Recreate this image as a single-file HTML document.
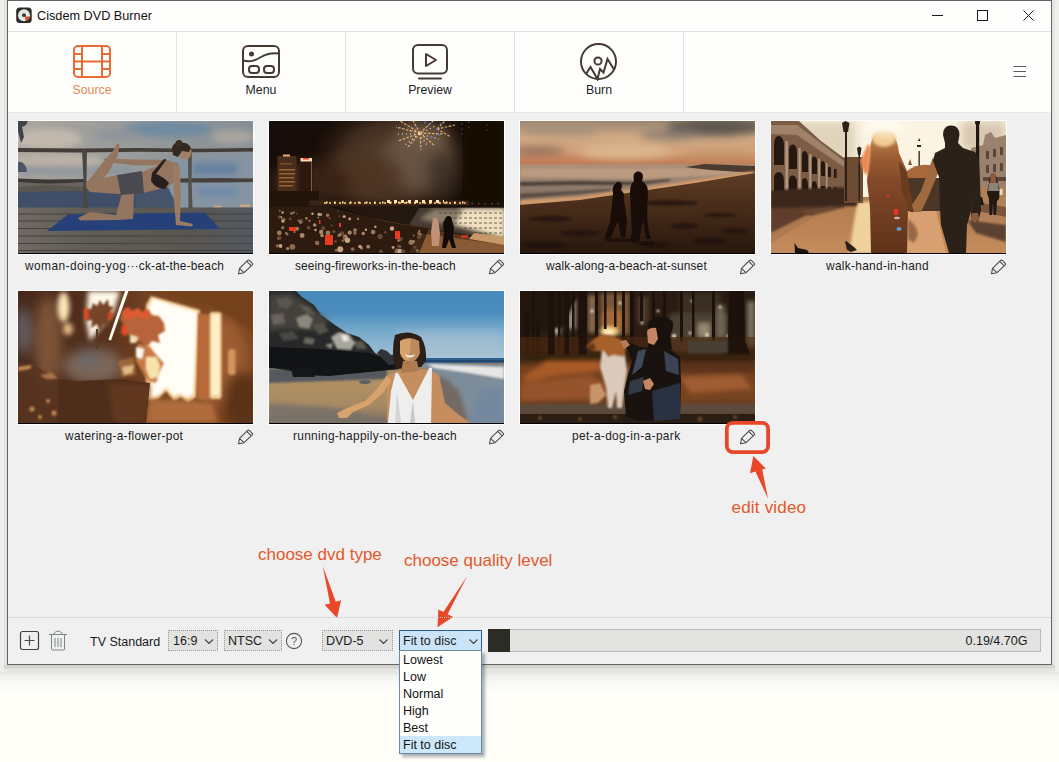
<!DOCTYPE html>
<html><head><meta charset="utf-8"><title>Cisdem DVD Burner</title>
<style>
*{box-sizing:border-box;margin:0;padding:0}
html,body{width:1059px;height:762px;overflow:hidden}
body{background:#fffef9;font-family:"Liberation Sans",sans-serif;color:#1e1e1e;position:relative}
.abs{position:absolute}
#shadow{left:0;top:0;width:1059px;height:692px;background:linear-gradient(#e4e4e1 0,#e4e4e1 665px,#d5d3cd 665px,#d7d5cf 668px,#e5e5e3 669px,#e7e7e5 673px,#f1f1ee 676px,#f8f8f4 682px,#fffef9 692px)}
#shl{left:0;top:0;width:4px;height:672px;background:#eeeeec}#shr{left:1055px;top:0;width:4px;height:672px;background:#eeeeec}
#win{left:7px;top:0;width:1045px;height:665px;border:1px solid #636363;background:#f0f0f0;overflow:hidden}
#title{left:0;top:0;width:1043px;height:30px;background:#fefefd}
#title span{left:29px;top:8px;font-size:12.7px;line-height:15px;color:#111;white-space:nowrap}
#tb{left:0;top:30px;width:1043px;height:82px;background:#fefefd;border-top:1px solid #e2e2e2;border-bottom:1px solid #e6e6e6}
.sep{top:0;width:1px;height:80px;background:#e3e3e3}
.tl{top:51px;width:120px;text-align:center;font-size:12.3px;line-height:15px;color:#222;white-space:nowrap}
.lbl{font-size:11.9px;line-height:15px;white-space:nowrap;color:#1c1c1c;letter-spacing:.1px}
.th{width:235px;height:133px;background:#000;overflow:hidden;border-bottom:1px solid #000;outline:1px solid #fdfdfd}
.th svg{display:block}
.bt{font-size:12.5px;line-height:15px;white-space:nowrap;color:#1a1a1a}
.cb{top:629px;height:21px;border:1px dotted #9a9a9a;background:#e2e2e1}
.ann{color:#e3592b;font-size:17px;line-height:20px;white-space:nowrap}
#list{left:391px;top:650px;width:83px;height:104px;background:#fefefd;border:1px solid #6d8aa0;box-shadow:3px 3px 3px rgba(60,70,80,.42)}
#list div{height:17px;line-height:18px;font-size:12.5px;padding-left:3px;white-space:nowrap;color:#141414}
</style></head><body>
<div id="shadow" class="abs"></div><div id="shl" class="abs"></div><div id="shr" class="abs"></div>
<div id="win" class="abs">
 <div id="title" class="abs">
  <svg class="abs" style="left:7px;top:5px" width="18" height="18" viewBox="0 0 18 18"><rect x="1.200" y="1.500" width="15.500" height="15.500" rx="3.500" fill="#2c2b27"/><circle cx="9" cy="9.200" r="6" fill="#e6e6e4"/><path d="M10.200 10.600L14.700 10.600A6 6 0 0 1 10.400 15Z" fill="#e8401c"/><circle cx="9" cy="9.200" r="1.900" fill="#3a332c"/></svg>
  <span class="abs" id="ttxt">Cisdem DVD Burner</span>
  <svg class="abs" style="left:915px;top:-1px" width="128" height="30" viewBox="0 0 128 30"><g stroke="#1a1a1a" stroke-width="1" fill="none"><path d="M9 15.5H20"/><rect x="54.5" y="10.5" width="10" height="10"/><path d="M100.5 10.5L110.5 20.5M110.5 10.5L100.5 20.5"/></g></svg>
 </div>
 <div id="tb" class="abs">
  <div class="sep abs" style="left:168px"></div><div class="sep abs" style="left:337px"></div><div class="sep abs" style="left:506px"></div><div class="sep abs" style="left:675px"></div>
  <!-- Source -->
  <svg class="abs" style="left:60px;top:9px" width="48" height="40" viewBox="0 0 48 40"><g fill="none" stroke="#ea6a35" stroke-width="2"><rect x="6" y="5" width="36" height="31" rx="4"/><path d="M14 5V36M34 5V36M14 20.5H34M6 13H14M6 20.5H14M6 28H14M34 13H42M34 20.5H42M34 28H42"/></g></svg>
  <div class="tl abs" id="t1" style="left:24px;color:#e38a50">Source</div>
  <!-- Menu -->
  <svg class="abs" style="left:229px;top:9px" width="48" height="40" viewBox="0 0 48 40"><g fill="none" stroke="#463b33" stroke-width="2"><rect x="6" y="5" width="36" height="31" rx="5"/><path d="M6 19.5C14 21.5 19 19 24 16S34 11.5 42 12.5"/><rect x="12" y="25" width="10" height="7" rx="3"/><rect x="27" y="25" width="10" height="7" rx="3"/></g><circle cx="14.5" cy="13" r="2.5" fill="#463b33"/></svg>
  <div class="tl abs" id="t2" style="left:193px">Menu</div>
  <!-- Preview -->
  <svg class="abs" style="left:398px;top:9px" width="48" height="40" viewBox="0 0 48 40"><g fill="none" stroke="#463b33" stroke-width="2" stroke-linejoin="round" stroke-linecap="round"><rect x="7" y="4" width="34" height="28.500" rx="5"/><path d="M13 37.500H35"/><path d="M20 13V25L30 19Z"/></g></svg>
  <div class="tl abs" id="t3" style="left:362px">Preview</div>
  <!-- Burn -->
  <svg class="abs" style="left:566px;top:7px" width="48" height="44" viewBox="0 0 48 44"><g fill="none" stroke="#463b33" stroke-width="2" stroke-linejoin="miter" stroke-miterlimit="3"><circle cx="24.5" cy="22.500" r="17.5"/><circle cx="24" cy="22" r="3.6"/><path d="M12 35L16.500 28L23.500 40L26 30L29.500 33.500L33.500 20L40 30.500"/></g></svg>
  <div class="tl abs" id="t4" style="left:531px">Burn</div>
  <svg class="abs" style="left:1005px;top:34px" width="14" height="14" viewBox="0 0 14 14"><path d="M0.500 0.500H13M0.500 5.500H13M0.500 10.500H13" stroke="#5c5c5c" stroke-width="1"/></svg>
 </div>
 <!-- thumbs row 1 -->
 <div class="th abs" id="p1" style="left:10px;top:120px"><svg width="235" height="132" viewBox="0 0 235 132">
<defs><filter id="b3" x="-20%" y="-20%" width="140%" height="140%"><feGaussianBlur stdDeviation="3"/></filter><filter id="b1" x="-20%" y="-20%" width="140%" height="140%"><feGaussianBlur stdDeviation="1.2"/></filter>
<linearGradient id="p1sky" x1="0" y1="0" x2="1" y2="0"><stop offset="0" stop-color="#aaa59d"/><stop offset=".45" stop-color="#9a9c9b"/><stop offset="1" stop-color="#858f96"/></linearGradient><linearGradient id="p1dk" x1="0" y1="0" x2="1" y2="0"><stop offset="0" stop-color="#6f6962"/><stop offset=".3" stop-color="#615c56"/><stop offset=".7" stop-color="#5a5651"/><stop offset="1" stop-color="#535862"/></linearGradient></defs>
<rect width="235" height="132" fill="url(#p1sky)"/>
<g filter="url(#b3)"><ellipse cx="30" cy="18" rx="34" ry="10" fill="#c2b9ad"/><ellipse cx="40" cy="40" rx="45" ry="7" fill="#bdb3a7"/><ellipse cx="150" cy="8" rx="45" ry="8" fill="#6f8aa0"/><ellipse cx="215" cy="16" rx="22" ry="7" fill="#a9a59f"/><ellipse cx="100" cy="14" rx="25" ry="6" fill="#8d959b"/>
<rect x="-5" y="45" width="120" height="8" fill="#8b949c"/><rect x="150" y="34" width="90" height="54" fill="#8694a2"/><rect x="175" y="42" width="45" height="12" fill="#6580a0"/><rect x="180" y="66" width="40" height="10" fill="#7089a8"/></g>
<rect x="0" y="62" width="125" height="6" fill="#6a635b"/>
<path d="M0 68H150V87H0Z" fill="#404e68"/><path d="M118 70L150 66L160 87H118Z" fill="#46546c"/><path d="M0 66L30 64L66 66L66 70L0 71Z" fill="#5a554e"/>
<path d="M0 41Q5 40 8 46L9 51H0Z" fill="#4a5567"/>
<path d="M0 0L10 0L8 4L4 6L6 16L3 22L0 10Z" fill="#3e444b"/>
<!-- deck -->
<rect x="0" y="86.500" width="235" height="46" fill="url(#p1dk)"/>
<g stroke="#45413d" stroke-width="1.200"><path d="M0 93H235M0 100H235M0 107.500H235M0 115H235M0 122.500H235M0 129.500H235"/></g>

<path d="M196 84.500h8v1.800h-8zM222 83.500h10v2.500h-10z" fill="#c9a47c"/>
<!-- rails -->
<path d="M0 27L60 27.500L120 27L180 27.800L235 27V30.500L180 31.300L120 30.800L60 31.500L0 31Z" fill="#423d37"/>
<path d="M0 57.500L30 58.500L68 58V61.500L30 62.500L0 61.500Z" fill="#3c3833"/><path d="M160 57.500L200 57L235 57.500V61L200 61.500L160 61.500Z" fill="#45413c"/>
<path d="M64 29L69 29L68.500 58L69.500 87L65 87L65.500 58Z" fill="#4a4640"/><path d="M170 29L174 29L173.500 58L174.500 87L170.500 87Z" fill="#55514c"/>
<!-- mat -->
<path d="M50 93.500L187 91.500L202 108L29 110Z" fill="#26407a"/>
<!-- woman -->
<g fill="#94755f">
<path d="M99 22.500L101.500 24L100 34L90 52L76 68L69 66L70 60L86 40L95 30Z"/>
<path d="M69 60Q66 66 72 71L100 73L118 72L122 54L100 54L80 58Z"/>
<path d="M85 37.500L118 38.500L150 39L156 44L118 44.500L88 41Z"/>
<path d="M122 52L150 40L160 42L162 56L150 66L125 72Z"/>
<path d="M104 72L116 72L115 98L100 99L62 99.500L60 97L72 91L98 94Z"/>
<path d="M155 45L162 46L163 75L162 100L175 103L174 105.500L158 104L156 80Z" fill="#9c7b65"/>
<ellipse cx="167" cy="31" rx="6.500" ry="7.500" fill="#a07e68"/>
</g>
<path d="M99 54L124 50L126 72L103 74Z" fill="#484a4f"/>
<path d="M134 52L146 38L148.500 38.500L138 53Q146 56 151 62L147 68Q138 68 133 60Z" fill="#271f1d"/>
<path d="M154 27Q155 21 162 22Q170 21 173 27L171 31L164 30L160 36L155 34Z" fill="#35291f"/><circle cx="161" cy="22.500" r="3.500" fill="#3a2d24"/>
</svg></div>
 <div class="th abs" id="p2" style="left:261px;top:120px"><svg width="235" height="132" viewBox="0 0 235 132">
<defs><filter id="c6" x="-30%" y="-30%" width="160%" height="160%"><feGaussianBlur stdDeviation="7"/></filter><filter id="c2" x="-30%" y="-30%" width="160%" height="160%"><feGaussianBlur stdDeviation="2"/></filter><filter id="c1" x="-30%" y="-30%" width="160%" height="160%"><feGaussianBlur stdDeviation=".7"/></filter>
<radialGradient id="p2h" cx=".5" cy=".5" r=".5"><stop offset="0" stop-color="#5d4737"/><stop offset=".6" stop-color="#4a3425" stop-opacity=".85"/><stop offset="1" stop-color="#2a190f" stop-opacity="0"/></radialGradient></defs>
<rect width="235" height="132" fill="#170d08"/>
<ellipse cx="125" cy="40" rx="85" ry="62" fill="url(#p2h)"/>
<g filter="url(#c6)"><ellipse cx="150" cy="38" rx="34" ry="32" fill="#6a5848" opacity=".8"/><ellipse cx="155" cy="14" rx="26" ry="12" fill="#7a6450" opacity=".6"/><ellipse cx="95" cy="55" rx="40" ry="25" fill="#4e3422" opacity=".8"/><ellipse cx="40" cy="62" rx="40" ry="22" fill="#3a2214" opacity=".9"/><ellipse cx="172" cy="55" rx="14" ry="25" fill="#3a2a20" opacity=".8"/></g>
<rect x="196" y="0" width="39" height="82" fill="#130a06" filter="url(#c2)"/>
<!-- buildings -->
<rect x="8.500" y="35" width="19" height="44" fill="#4a2e1c"/><rect x="31" y="38" width="12.500" height="41" fill="#2c180e"/>
<g fill="#a8683a" opacity=".9"><rect x="10" y="48" width="16" height="1.500"/><rect x="10" y="52" width="16" height="1.500"/><rect x="10" y="56" width="15" height="1.500"/><rect x="10" y="60" width="16" height="1.500"/><rect x="10" y="64" width="14" height="1.500"/><rect x="11" y="42" width="12" height="1.500" opacity=".6"/></g>
<rect x="31.500" y="37" width="11.500" height="3.500" fill="#ffd9b0"/><rect x="34" y="37" width="6" height="1.500" fill="#e8402a"/><rect x="14" y="33.500" width="7" height="2" fill="#e8a878"/><rect x="42" y="41" width="1" height="32" fill="#8a5a38"/>
<rect x="0" y="70" width="50" height="16" fill="#22130b"/>
<!-- lights strip -->
<rect x="40" y="79.500" width="160" height="5" fill="#3a2416"/>
<g fill="none" stroke-width="2.200"><path d="M55 82H200" stroke="#e8a050" stroke-dasharray="2 3"/><path d="M57 81.500H195" stroke="#fff0c8" stroke-dasharray="1.500 6.500"/><path d="M118 80.500H175" stroke="#ffe8b0" stroke-dasharray="3 4" stroke-width="3"/><path d="M196 82.500H235" stroke="#6a4020" stroke-dasharray="1.500 5" stroke-width="1.500"/></g>
<!-- water -->
<path d="M45 85H235V132H45Z" fill="#231710"/>
<path d="M150 87H235V120L140 104Z" fill="#443a32"/>
<g filter="url(#c2)"><path d="M190 87H236V118L185 104Z" fill="#f0e0c0"/><path d="M165 88H195L185 106L150 98Z" fill="#8a7a68"/></g>
<g stroke="#3a3028" stroke-width="1" stroke-dasharray="3 2" opacity=".7"><path d="M170 92H235M180 97H235M175 102H235M195 107H235M205 112H235"/></g>
<rect x="150" y="84" width="85" height="2.500" fill="#1a100a"/>
<!-- beach -->
<path d="M0 86L60 86L118 100L235 122V132H0Z" fill="#5a361e"/>
<path d="M150 112L235 124V132H140Z" fill="#8a5a34"/><path d="M205 112L235 116V124L200 118Z" fill="#c89868" filter="url(#c1)"/>
<!-- crowd -->
<g fill="#130b07"><path d="M0 86H70L118 101L160 108L150 132H0Z" opacity=".62"/></g>
<g filter="url(#c1)"><g fill="#a88868"><circle cx="51.8" cy="93.6" r="1.5"/><circle cx="92.5" cy="127.0" r="1.5"/><circle cx="17.2" cy="112.1" r="1.2"/><circle cx="94.3" cy="112.5" r="1.7"/><circle cx="45.7" cy="104.0" r="1.8"/><circle cx="24.7" cy="91.5" r="1.1"/><circle cx="151.0" cy="113.5" r="1.7"/><circle cx="144.5" cy="120.4" r="1.5"/><circle cx="33.1" cy="114.5" r="2.4"/><circle cx="76.3" cy="115.7" r="2.3"/><circle cx="25.5" cy="111.1" r="1.0"/><circle cx="52.2" cy="111.0" r="2.2"/><circle cx="89.0" cy="97.9" r="1.1"/><circle cx="80.7" cy="111.7" r="2.1"/><circle cx="22.5" cy="92.4" r="1.2"/><circle cx="31.7" cy="101.0" r="1.8"/><circle cx="53.0" cy="114.5" r="1.8"/><circle cx="18.7" cy="127.4" r="1.5"/><circle cx="10.0" cy="117.3" r="1.7"/><circle cx="127.2" cy="130.8" r="1.2"/><circle cx="99.2" cy="125.7" r="1.9"/></g><g fill="#8a6a50"><circle cx="149.8" cy="112.4" r="1.6"/><circle cx="8.3" cy="124.8" r="1.6"/><circle cx="85.9" cy="112.1" r="1.8"/><circle cx="48.1" cy="122.0" r="2.3"/><circle cx="13.7" cy="106.8" r="1.7"/><circle cx="60.7" cy="97.2" r="0.9"/><circle cx="10.8" cy="90.0" r="0.9"/><circle cx="76.1" cy="117.5" r="1.9"/><circle cx="128.4" cy="130.3" r="2.8"/><circle cx="62.0" cy="118.3" r="1.3"/><circle cx="73.7" cy="119.7" r="1.2"/><circle cx="83.7" cy="128.1" r="1.9"/><circle cx="130.9" cy="125.6" r="1.3"/><circle cx="70.1" cy="95.1" r="0.7"/><circle cx="23.4" cy="125.8" r="2.9"/><circle cx="14.2" cy="99.0" r="2.0"/><circle cx="14.9" cy="98.5" r="1.6"/><circle cx="144.7" cy="114.4" r="1.0"/><circle cx="148.3" cy="129.6" r="1.6"/><circle cx="32.7" cy="100.7" r="1.2"/><circle cx="49.3" cy="96.5" r="1.0"/></g><g fill="#c4a484"><circle cx="123.0" cy="107.5" r="2.2"/><circle cx="13.9" cy="100.2" r="1.5"/><circle cx="91.0" cy="125.5" r="1.7"/><circle cx="96.9" cy="108.7" r="1.2"/><circle cx="12.0" cy="96.1" r="1.2"/><circle cx="50.0" cy="93.3" r="1.6"/><circle cx="78.4" cy="119.2" r="2.7"/><circle cx="75.1" cy="95.5" r="1.5"/><circle cx="71.2" cy="128.2" r="3.0"/><circle cx="13.6" cy="91.5" r="1.2"/><circle cx="130.8" cy="130.1" r="2.4"/><circle cx="80.7" cy="97.9" r="1.4"/><circle cx="106.4" cy="105.8" r="1.2"/><circle cx="124.1" cy="126.5" r="1.4"/><circle cx="43.5" cy="92.7" r="1.2"/><circle cx="11.5" cy="125.0" r="1.9"/><circle cx="46.5" cy="109.0" r="1.2"/></g><g fill="#6a4a34"><circle cx="69.1" cy="90.1" r="0.8"/><circle cx="10.4" cy="96.1" r="1.6"/><circle cx="66.6" cy="120.3" r="1.3"/><circle cx="111.1" cy="115.5" r="2.6"/><circle cx="21.3" cy="97.9" r="1.3"/><circle cx="129.6" cy="125.0" r="1.6"/><circle cx="150.2" cy="115.8" r="2.2"/><circle cx="62.6" cy="104.6" r="1.0"/><circle cx="134.3" cy="130.7" r="2.1"/><circle cx="69.1" cy="115.0" r="1.1"/><circle cx="27.7" cy="92.6" r="0.9"/><circle cx="72.9" cy="112.7" r="2.4"/><circle cx="10.7" cy="117.0" r="1.9"/><circle cx="32.3" cy="99.2" r="1.4"/><circle cx="145.9" cy="126.3" r="1.5"/><circle cx="111.9" cy="130.7" r="1.9"/><circle cx="54.1" cy="107.2" r="1.9"/><circle cx="64.7" cy="110.6" r="1.7"/><circle cx="116.1" cy="111.2" r="1.2"/><circle cx="39.6" cy="106.7" r="1.8"/><circle cx="131.7" cy="118.1" r="2.1"/></g><g fill="#9a7a5c"><circle cx="10.3" cy="111.9" r="2.4"/><circle cx="67.2" cy="129.3" r="1.3"/><circle cx="37.4" cy="97.3" r="1.4"/><circle cx="29.6" cy="99.4" r="1.0"/><circle cx="59.0" cy="111.9" r="2.4"/><circle cx="142.2" cy="121.3" r="2.6"/><circle cx="18.3" cy="113.4" r="1.1"/><circle cx="150.3" cy="110.2" r="1.1"/><circle cx="58.6" cy="94.3" r="1.7"/><circle cx="86.0" cy="109.1" r="1.9"/><circle cx="129.5" cy="119.6" r="1.4"/><circle cx="40.5" cy="99.9" r="1.1"/><circle cx="28.1" cy="107.8" r="2.0"/><circle cx="70.6" cy="114.0" r="1.8"/><circle cx="104.1" cy="111.0" r="2.3"/></g><g fill="#e63a22"><rect x="20" y="106" width="7" height="4"/><rect x="56" y="114" width="8" height="10"/><rect x="126" y="110" width="5" height="8"/><rect x="50" y="99" width="1.500" height="4"/><rect x="70" y="102" width="2" height="4"/><rect x="163" y="102" width="4" height="8"/><rect x="192" y="114" width="7" height="3" opacity=".7"/></g></g>
<path d="M164 97.500Q166.500 96 169 98L171 112L170 125H163L162 111Z" fill="#c09078"/>
<path d="M177 96Q179.500 94 182 96L185 106L184 116L187 127H183L180 118L177 127H173L175 112L174 102Z" fill="#120b07"/>
<!-- fireworks -->
<g stroke="#e8b878" stroke-width="1.200" stroke-dasharray="2.500 1.500" fill="none" opacity=".95"><path d="M151 12L127 6M151 12L129 20M151 12L138 27M151 12L152 29M151 12L166 25M151 12L174 13M151 12L164 0M151 12L143 -2M151 12L131 0M168 8L186 4M168 8L182 16M168 8L176 0"/></g>
<g stroke="#f8e0b0" stroke-width="1.200" stroke-dasharray="1 3" fill="none"><path d="M150 13L126 13M150 13L136 24M150 13L158 24M150 13L170 18M150 13L166 5"/></g>
<g fill="#4a78c8"><circle cx="160" cy="4" r="1"/><circle cx="168" cy="8" r="1"/><circle cx="163" cy="16" r="1"/><circle cx="172" cy="3" r=".9"/><circle cx="156" cy="1.500" r=".9"/><circle cx="170" cy="14" r=".9"/></g>
<g stroke="#5a4a3a" stroke-width="1" stroke-dasharray="2 3" opacity=".8"><path d="M193 2V16M200 0V10M218 3V12"/></g>
</svg></div>
 <div class="th abs" id="p3" style="left:512px;top:120px"><svg width="235" height="132" viewBox="0 0 235 132">
<defs><filter id="d4" x="-30%" y="-30%" width="160%" height="160%"><feGaussianBlur stdDeviation="4"/></filter><filter id="d1" x="-30%" y="-30%" width="160%" height="160%"><feGaussianBlur stdDeviation="1"/></filter>
<linearGradient id="p3s" x1="0" y1="0" x2="0" y2="1"><stop offset="0" stop-color="#9a8672"/><stop offset=".35" stop-color="#cfa884"/><stop offset=".7" stop-color="#d2a27a"/><stop offset=".88" stop-color="#c4825a"/><stop offset="1" stop-color="#a87858"/></linearGradient>
<linearGradient id="p3w" x1="0" y1="0" x2="0" y2="1"><stop offset="0" stop-color="#b0907a"/><stop offset=".4" stop-color="#9a8270"/><stop offset="1" stop-color="#6a5a50"/></linearGradient>
<linearGradient id="p3d" x1="0" y1="0" x2="0" y2="1"><stop offset="0" stop-color="#5e3c24"/><stop offset=".5" stop-color="#442a18"/><stop offset="1" stop-color="#27170d"/></linearGradient></defs>
<rect width="235" height="46" fill="url(#p3s)"/>
<g filter="url(#d4)"><ellipse cx="195" cy="6" rx="48" ry="9" fill="#5e5650"/><ellipse cx="150" cy="14" rx="30" ry="5" fill="#8a7c70"/><ellipse cx="18" cy="30" rx="28" ry="4" fill="#8a6c5a"/><ellipse cx="105" cy="30" rx="45" ry="7" fill="#dcb88e"/><ellipse cx="40" cy="8" rx="40" ry="6" fill="#a8907a"/><ellipse cx="30" cy="39" rx="40" ry="3.500" fill="#c87e58"/><ellipse cx="200" cy="36" rx="40" ry="4" fill="#c08a62"/></g>
<rect y="43.500" width="235" height="45" fill="url(#p3w)"/>
<path d="M0 48H170L235 47V52L120 58L0 56Z" fill="#c2a284" opacity=".75" filter="url(#d1)"/>
<g filter="url(#d1)" fill="#4a4038"><path d="M0 61L60 60L118 61L150 58L150 60L118 64L50 64L0 65Z"/><path d="M0 73L40 71L90 68L90 70L40 74L0 77Z" opacity=".8"/></g>
<path d="M165 46L185 43L235 45V52L190 49Z" fill="#4a3a30"/>
<path d="M0 79L60 75L118 67L175 59L230 50.500H235V56L175 64L118 72L60 80L0 85Z" fill="#d09a6c" filter="url(#d1)"/>
<path d="M0 84L60 79L118 70.500L175 62L235 52V132H0Z" fill="url(#p3d)"/>
<g fill="#1c110a" opacity=".7" filter="url(#d1)"><ellipse cx="30" cy="98" rx="22" ry="2.500"/><ellipse cx="150" cy="82" rx="28" ry="2.500"/><ellipse cx="60" cy="112" rx="20" ry="2.500"/><ellipse cx="165" cy="105" rx="14" ry="2.500"/><ellipse cx="200" cy="94" rx="16" ry="2"/><ellipse cx="190" cy="120" rx="18" ry="3"/><ellipse cx="25" cy="124" rx="22" ry="3"/><ellipse cx="135" cy="124" rx="14" ry="2.500"/><ellipse cx="215" cy="110" rx="14" ry="2.500"/></g>
<g fill="#170c08">
<path d="M97 61Q101.500 60 102 65L101 69Q105 72 104 78L107 100L105 116L101 116L98 100L91 116L86 119L85 116L90 100L92 84L93 72Q91 66 97 61Z"/>
<path d="M117 50.500Q123 50 123 56L122 60Q128 63 128 72L127 95L129 112L131 118H126L123 100L119 120L113 122L110 120L112 112L111 94L110 72Q110 63 114 60Q112 52 117 50.500Z"/>
<ellipse cx="98" cy="119" rx="13" ry="2" opacity=".7"/><ellipse cx="125" cy="122" rx="10" ry="2" opacity=".7"/>
</g>
</svg></div>
 <div class="th abs" id="p4" style="left:763px;top:120px"><svg width="235" height="132" viewBox="0 0 235 132">
<defs><filter id="e5" x="-30%" y="-30%" width="160%" height="160%"><feGaussianBlur stdDeviation="5"/></filter><filter id="e2" x="-30%" y="-30%" width="160%" height="160%"><feGaussianBlur stdDeviation="1.800"/></filter><filter id="e1" x="-30%" y="-30%" width="160%" height="160%"><feGaussianBlur stdDeviation=".8"/></filter>
<linearGradient id="p4g" x1="0" y1="0" x2="0" y2="1"><stop offset="0" stop-color="#b07a4e"/><stop offset="1" stop-color="#c48c5c"/></linearGradient>
<linearGradient id="p4w" x1="0" y1="0" x2="0" y2="1"><stop offset="0" stop-color="#c88c52"/><stop offset=".22" stop-color="#9a5c30"/><stop offset=".4" stop-color="#84492a"/><stop offset="1" stop-color="#5e3218"/></linearGradient></defs>
<rect width="235" height="132" fill="#fbf4e2"/>
<rect x="25" y="0" width="60" height="40" fill="#e2d4bc" filter="url(#e5)"/>
<rect x="190" y="0" width="45" height="30" fill="#d8c8b0" filter="url(#e5)"/>
<!-- ground -->
<rect y="76" width="235" height="56" fill="url(#p4g)"/>
<path d="M86 82L100 80L104 132H78Z" fill="#f0d29c" filter="url(#e2)"/>
<path d="M0 84L62 84L30 97L0 112Z" fill="#5e3e2a" filter="url(#e1)"/><path d="M30 90L70 83L75 86L40 95Z" fill="#6a4630" filter="url(#e1)"/>
<path d="M0 112L30 97L45 95L0 122Z" fill="#a0704a" opacity=".5"/>
<path d="M196 99L235 104V121L205 112Z" fill="#5c4232" filter="url(#e1)"/>
<path d="M135 86L165 88L175 132H136Z" fill="#d8a070"/>
<!-- left building -->
<path d="M0 0H28L50 20L73 37V79L0 84Z" fill="#7c5c44"/>
<path d="M0 4L26 4L73 40V46L26 14L0 13Z" fill="#a88c72" opacity=".8"/>
<g fill="#251810"><path d="M3 24Q3 15 8 15Q13 16 13 25V44H3Z"/><path d="M18 30Q18 23 22 23.500Q26 24 26 32V48H18Z"/><path d="M31 35Q31 30 34 30Q37 31 37 37V51H31Z"/><path d="M41 39Q41 35 43.500 35.500Q46 36 46 41V53H41Z"/><path d="M50 43Q50 40 52 40Q54 41 54 45V55H50Z"/><path d="M57 46h3v10h-3zM63 48h2.500v9h-2.500z"/>
<path d="M3 58Q3 51 8 51Q13 52 13 60V80H3Z"/><path d="M18 60Q18 54 22 54.500Q26 55 26 62V80H18Z"/><path d="M31 62Q31 57 34 57Q37 58 37 64V79H31Z"/><path d="M41 64Q41 60 43.500 60Q46 61 46 66V79H41Z"/><path d="M50 65h4v13h-4zM57 66h3v12h-3zM63 66h2.500v12h-2.500z"/></g>
<g fill="#b39c84"><rect x="14.500" y="20" width="2.400" height="50"/><rect x="27.500" y="27" width="2.200" height="43"/><rect x="38.300" y="33" width="2" height="36"/><rect x="47.200" y="38" width="1.800" height="30"/><rect x="55" y="42" width="1.400" height="26"/></g>
<path d="M0 70L20 68L50 67L86 66V85L0 87Z" fill="#3a271b" filter="url(#e1)"/>
<rect x="73" y="36" width="19" height="46" fill="#6e4c34"/>
<!-- lamps -->
<g fill="#2a2018"><rect x="74" y="10" width="2" height="70"/><path d="M71 2L74.500 0L78.500 2L77 11H72.500Z"/><rect x="87.500" y="34" width="1.500" height="46"/><path d="M86 27L88.300 25.500L90.500 27L89.500 34H87Z"/><rect x="147.500" y="30" width="1.300" height="18"/><path d="M146 24h4v2h-4zM147 20l1.200-3l1.200 3z"/></g>
<!-- center bg -->
<path d="M136 50Q148 41 162 45V60H136Z" fill="#a8683a"/><path d="M136 57H170V90H136Z" fill="#4c3626"/><path d="M137 44l2-6l2 6z" fill="#8a5a34"/>
<!-- right building, post, bg woman -->
<path d="M200 27L212 24L214 14L220 11L224 17L235 14V74H200Z" fill="#9a826c"/>
<g fill="#5a4638"><rect x="215" y="30" width="3" height="8"/><rect x="222" y="28" width="3" height="8"/><rect x="229" y="26" width="3" height="8"/><rect x="215" y="44" width="3" height="8"/><rect x="222" y="43" width="3" height="8"/><rect x="229" y="42" width="3" height="8"/><rect x="212" y="56" width="23" height="4"/></g>
<path d="M200 66H235V100H200Z" fill="#b08058"/><path d="M210 82L235 86V96L206 90Z" fill="#7a563c"/>
<g fill="#1e1610"><rect x="205" y="0" width="3.200" height="80"/><path d="M203 76h8l2 8h-12z"/><circle cx="206.500" cy="1.500" r="2.500"/></g>
<path d="M219 56Q222 51 225 55L227 62L229 70L228 78L226 80L225 94H222.500L222 82L221 94H218.500L218 78L216 72Z" fill="#241812"/><path d="M218 62L227 62L228 70L217 70Z" fill="#8a8478"/><path d="M219.500 53Q222 51 224.500 53L225.500 62H219Z" fill="#8a5a3a"/><rect x="228.500" y="68" width="3" height="6" fill="#e8dcc8"/>
<!-- woman -->
<path d="M99 30Q100 10 112 10Q126 10 128 32L136 50L137 86L136 132H100L99 86L96 60Z" fill="url(#p4w)"/>
<ellipse cx="113" cy="17" rx="12" ry="9" fill="#f2cc92" filter="url(#e2)"/><ellipse cx="114" cy="4" rx="20" ry="9" fill="#fffaf0" filter="url(#e5)"/>
<path d="M97 23L100 26L99 40L97 54L93 52L89 40Z" fill="#e88c54" filter="url(#e1)"/>
<path d="M128 40L136 52L142 84L148 86L147 91L139 91L131 70Z" fill="#6a3c1e"/>
<ellipse cx="125" cy="91" rx="2.200" ry="3.200" fill="#e8341e"/><circle cx="117" cy="75" r="1.500" fill="#e8341e" opacity=".8"/><ellipse cx="128" cy="108" rx="2.500" ry="2" fill="#6a9ac8"/><ellipse cx="126" cy="97" rx="3" ry="1.200" fill="#c8b8a8"/>
<path d="M137 98Q146 104 147 114L143 122L137 118Z" fill="#8a5a3c" opacity=".8" filter="url(#e1)"/>
<!-- man -->
<path d="M162 36L150 70L141 84L143 91L150 91L158 74L168 50Z" fill="#a06a40"/>
<path d="M172 14Q172 4.500 180 4.500Q188.500 4.500 188.500 14L187 22L192 27L204 31L208 38L209 60L210 90L207 101L201 101L200 92L201 70L200 90L196 104L195 132H178L170 104L169 88L168 56L162 40L164 32L174 27L174 22Z" fill="#2c2119"/>
<path d="M201 92L207 92L208 99L204 102L200 99Z" fill="#8a5a3a"/>
<!-- pigeons -->
<path d="M23.500 122L27 127L36 129L38 132H24Z" fill="#1a120c"/><path d="M74 120.500Q76 119.500 77 121.500L83 126L86 129L80 131L76 129Z" fill="#2a2018"/>
</svg></div>
 <div class="th abs" id="p5" style="left:10px;top:290px"><svg width="235" height="132" viewBox="0 0 235 132">
<defs><filter id="f6" x="-30%" y="-30%" width="160%" height="160%"><feGaussianBlur stdDeviation="6"/></filter><filter id="f3" x="-30%" y="-30%" width="160%" height="160%"><feGaussianBlur stdDeviation="2.500"/></filter><filter id="f1" x="-30%" y="-30%" width="160%" height="160%"><feGaussianBlur stdDeviation="1"/></filter>
<linearGradient id="p5b" x1="0" y1="0" x2="1" y2="0"><stop offset="0" stop-color="#46281a"/><stop offset=".35" stop-color="#54301c"/><stop offset=".6" stop-color="#7a4622"/><stop offset="1" stop-color="#7c4520"/></linearGradient></defs>
<rect width="235" height="132" fill="url(#p5b)"/>
<g filter="url(#f6)"><ellipse cx="30" cy="50" rx="14" ry="45" fill="#8a5e40" opacity=".8"/><ellipse cx="5" cy="40" rx="6" ry="24" fill="#6a6c74"/><ellipse cx="200" cy="70" rx="30" ry="45" fill="#9c5c30"/><ellipse cx="225" cy="110" rx="20" ry="30" fill="#5a3018"/><ellipse cx="75" cy="75" rx="30" ry="18" fill="#7a6658"/><ellipse cx="70" cy="68" rx="10" ry="6" fill="#5e666e"/></g>
<!-- big window -->
<g filter="url(#f1)"><path d="M128 14L133 5L182 19L180 60L178 106L170 112L163 106L156 110L148 100L140 108L133 110L128 108Z" fill="#f6d49c"/><path d="M131 16L135 8L179 21L177 60L175 103L169 107L162 102L156 105L148 96L140 104L134 106Z" fill="#fffdf6"/></g>
<path d="M180 22L191 24V110L179 108Z" fill="#b86a38" filter="url(#f1)"/>
<g filter="url(#f1)"><rect x="191.500" y="21" width="12" height="87" rx="3" fill="#f2d29a"/><rect x="193.500" y="24" width="8" height="80" rx="3" fill="#fdf0c8"/><rect x="210" y="58" width="7.500" height="26" rx="3" fill="#d6945c"/></g>
<path d="M120 0L235 0V40L200 18L135 2Z" fill="#74431f" filter="url(#f1)"/>
<path d="M130 108L178 110L195 112L200 132H120Z" fill="#b06c3c" filter="url(#f3)"/>
<!-- left bokeh -->
<g filter="url(#f3)"><ellipse cx="45.500" cy="16" rx="6" ry="15" fill="#fbe6b8"/><ellipse cx="50" cy="38" rx="5" ry="6" fill="#e6bc84"/><path d="M70 0H102L96 20L88 30L72 50L68 30Z" fill="#fff8e8"/></g>
<path d="M107 0H110.500L93 49.500L90.500 48.500Z" fill="#fffaf0"/>
<!-- flower 1 -->
<g filter="url(#f1)"><path d="M82 9L85 14L90 8L91 15L96 16L92 21L95 26L90 28L91 36L86 33L82 40L79 33L73 37L74 29L66 30L70 24L66 18L73 18L75 12L79 15Z" fill="#744428"/><path d="M66 18L70 17L71 27L67 30Z" fill="#e8451f"/><path d="M90 22L95 20L94 28L90 29Z" fill="#e8451f" opacity=".8"/></g>
<rect x="78" y="38" width="2" height="20" fill="#5a3a24"/>
<!-- flower 2 -->
<g filter="url(#f1)"><path d="M104 20L110 16L114 20L120 17L124 21L130 18L134 24L141 25L146 32L147 40L140 44L142 52L134 50L128 56L122 50L114 52L112 44L104 42L106 34L102 28Z" fill="#b8643a"/><path d="M104 20L110 16L114 20L120 17L124 21L130 18L133 24L128 28L120 25L112 28L106 28Z" fill="#de5a30"/><path d="M104 34L110 36L108 46L103 42Z" fill="#e24c26"/><path d="M112 44L120 46L118 52L112 52Z" fill="#f4e0b0"/></g>
<!-- lit leaves right of pot -->
<g filter="url(#f1)"><path d="M120 52L132 56L140 66L146 72L142 80L138 92L130 90L124 80L118 70Z" fill="#c87a44"/><path d="M128 66L138 66L142 74L140 86L132 88L128 78Z" fill="#f8e2aa"/><path d="M118 56L126 58L124 68L118 66Z" fill="#fffaf0"/><path d="M100 70L116 66L118 84L104 86Z" fill="#a8703c" opacity=".8"/><path d="M104 76L116 74L114 82L106 84Z" fill="#f0d098" opacity=".8"/></g>
<!-- pot -->
<path d="M34 88L60 90L100 88L132 92L128 132H40Z" fill="#4e2e1a"/>
<path d="M90 92L132 94L128 132H96Z" fill="#6a3c20" opacity=".7" filter="url(#f3)"/>
<path d="M0 70L20 76L40 90L40 132H0Z" fill="#5a3620" opacity=".8"/>
<g filter="url(#f1)" fill="#c88a58"><circle cx="14" cy="118" r="2.500"/><circle cx="30" cy="110" r="2"/><circle cx="22" cy="126" r="2"/><circle cx="36" cy="122" r="2.500"/><path d="M0 76L14 74L12 78L0 80Z"/><path d="M22 84L34 82L40 88L28 88Z" opacity=".7"/></g>
</svg></div>
 <div class="th abs" id="p6" style="left:261px;top:290px"><svg width="235" height="132" viewBox="0 0 235 132">
<defs><filter id="g4" x="-30%" y="-30%" width="160%" height="160%"><feGaussianBlur stdDeviation="4"/></filter><filter id="g1" x="-30%" y="-30%" width="160%" height="160%"><feGaussianBlur stdDeviation="1"/></filter><filter id="g2" x="-30%" y="-30%" width="160%" height="160%"><feGaussianBlur stdDeviation="2"/></filter>
<linearGradient id="p6s" x1="0" y1="0" x2="0" y2="1"><stop offset="0" stop-color="#478abb"/><stop offset=".3" stop-color="#4b8dbd"/><stop offset=".55" stop-color="#74a8cb"/><stop offset="1" stop-color="#a6c2d6"/></linearGradient>
<linearGradient id="p6b" x1="0" y1="0" x2="0" y2="1"><stop offset="0" stop-color="#8a7a66"/><stop offset=".25" stop-color="#b29264"/><stop offset=".7" stop-color="#a88a62"/><stop offset="1" stop-color="#7e7266"/></linearGradient></defs>
<rect width="235" height="70" fill="url(#p6s)"/>
<rect x="130" y="40" width="105" height="28" fill="#b8c8d4" opacity=".45" filter="url(#g4)"/>
<!-- sea right -->
<rect x="150" y="67" width="85" height="6" fill="#2f5f8e"/><rect x="150" y="69" width="85" height="2" fill="#1f3f66" opacity=".7"/>
<!-- beach -->
<rect y="72" width="235" height="60" fill="url(#p6b)"/>
<path d="M150 72L235 74V132H165L175 100Z" fill="#7d8c9a"/>
<path d="M150 90L175 86L190 100L200 132H160Z" fill="#726a64" filter="url(#g2)"/>
<path d="M158 73L235 76V88L200 82L165 77Z" fill="#e6e6e4" filter="url(#g1)"/>
<path d="M200 132L210 100L235 96V132Z" fill="#6e87a2" opacity=".6" filter="url(#g2)"/>
<path d="M0 78L118 76V88L60 90L0 92Z" fill="#55585f" filter="url(#g1)"/>
<path d="M0 112L60 116L118 128V132H0Z" fill="#76706a" opacity=".8" filter="url(#g2)"/>
<!-- hill -->
<path d="M0 0L27 0L33 6L45 14L52 24L66 34L78 42L90 46L100 54L106 62L118 68L128 72L130 78L60 84L20 80L0 76Z" fill="#27282a"/>
<path d="M0 4L20 2L40 14L60 30L50 40L20 38L0 40Z" fill="#4e4a42" opacity=".8" filter="url(#g2)"/>
<g filter="url(#g1)"><path d="M8 8L18 6L24 12L18 18L10 16Z" fill="#5a564c"/><path d="M30 14L40 16L46 24L38 22Z" fill="#5e5a50"/><path d="M44 34L54 32L60 40L50 44Z" fill="#55524a"/><path d="M10 42L24 40L30 48L14 50Z" fill="#4a4842"/><path d="M84 50L94 50L98 58L88 58Z" fill="#5a5850"/><path d="M36 46L46 48L44 54L34 52Z" fill="#6a665c"/><path d="M27 27L38 23L44 28L40 38L30 36Z" fill="#8c877c"/><path d="M62 46L70 41L80 43L86 52L82 59L68 58Z" fill="#a9a79c"/><path d="M72 44L78 44L80 50L74 50Z" fill="#e8e8e4"/><path d="M2 24L14 22L16 32L4 34Z" fill="#6a645a"/><path d="M56 54L64 52L62 58Z" fill="#9a968a"/></g>
<path d="M0 56L50 58L100 62L128 72L130 78L60 85L30 84L20 78L0 77Z" fill="#121314"/>
<path d="M22 78L40 76L46 86L24 86Z" fill="#15171a"/>
<path d="M108 62L112 58L118 60L122 64L128 62L132 68L136 72L120 74Z" fill="#30343a"/>
<ellipse cx="96" cy="91" rx="6" ry="2" fill="#5e6068"/>
<!-- woman -->
<path d="M118 86L128 80L160 78L170 84L176 112L190 124L202 132H118Z" fill="#c68e5e"/>
<path d="M118 84L122 90L114 102L100 114L84 121L78 127L70 127L68 122L76 118L96 110L108 98Z" fill="#d9a26c"/>
<path d="M126 44Q140 38 152 46Q158 56 157 70L152 76L126 78Q122 60 126 44Z" fill="#2c1f17"/>
<path d="M131 50Q140 44 150 50L151 62Q148 70 141 72Q133 70 131 62Z" fill="#bc8a5c"/><path d="M131 50Q136 47 142 48L140 70Q133 68 131 62Z" fill="#dba670" opacity=".8"/>
<path d="M136 63Q141 66 146 63L145 65Q141 68 137 65Z" fill="#f4f0ea"/>
<path d="M134 70L148 70L150 80L132 82Z" fill="#b07a50"/>
<path d="M126.500 82L129 82L144 109L160.500 76.500L163 77L162 132H119L122 100Z" fill="#eeeeec"/>
<path d="M144 109L146 132H141Z" fill="#c8c8c8"/><path d="M128 100L132 132H126Z" fill="#d4d4d4"/>
</svg></div>
 <div class="th abs" id="p7" style="left:512px;top:290px"><svg width="235" height="132" viewBox="0 0 235 132">
<defs><filter id="h5" x="-30%" y="-30%" width="160%" height="160%"><feGaussianBlur stdDeviation="5"/></filter><filter id="h2" x="-30%" y="-30%" width="160%" height="160%"><feGaussianBlur stdDeviation="2"/></filter><filter id="h1" x="-30%" y="-30%" width="160%" height="160%"><feGaussianBlur stdDeviation=".9"/></filter>
<linearGradient id="p7g" x1="0" y1="0" x2="0" y2="1"><stop offset="0" stop-color="#3c2414"/><stop offset=".2" stop-color="#74421f"/><stop offset=".6" stop-color="#784420"/><stop offset="1" stop-color="#4e3222"/></linearGradient></defs>
<rect width="235" height="66" fill="#2a1c12"/>
<!-- sky patches -->
<g filter="url(#h2)"><rect x="47" y="8" width="9" height="30" fill="#9a8a7a"/><rect x="68" y="4" width="8" height="38" fill="#8a6a50"/><rect x="80" y="2" width="30" height="42" fill="#7a5638"/><rect x="34" y="37" width="6" height="6" fill="#d8ccc0"/><ellipse cx="92" cy="30" rx="12" ry="12" fill="#b87038" opacity=".7"/><ellipse cx="89" cy="41" rx="9" ry="5" fill="#ffe08a"/><ellipse cx="89" cy="42" rx="4" ry="2.500" fill="#fffbe0"/>
<rect x="150" y="22" width="58" height="40" fill="#4c4032"/><rect x="160" y="2" width="40" height="20" fill="#3a2e22"/><rect x="178" y="32" width="12" height="14" fill="#a89880" opacity=".8"/><rect x="197" y="14" width="8" height="32" fill="#7a6e5c" opacity=".8"/><rect x="227" y="10" width="8" height="46" fill="#7a7264"/><rect x="118" y="6" width="10" height="26" fill="#5a4634" opacity=".8"/><rect x="8" y="4" width="16" height="10" fill="#4a3a2a" opacity=".7"/></g>
<g fill="#fff0d8" filter="url(#h1)"><circle cx="154" cy="45" r="2"/><circle cx="170" cy="42" r="1.300"/><circle cx="187" cy="44" r="1.800"/><circle cx="200" cy="16" r="1.300"/><circle cx="172" cy="10" r="1.300"/><circle cx="208" cy="45" r="1.300"/><circle cx="122" cy="32" r="1.300"/><circle cx="52" cy="14" r="1.500"/><circle cx="72" cy="20" r="1.500"/><circle cx="100" cy="12" r="1.500"/><circle cx="138" cy="20" r="1.300"/></g>
<!-- canopy + trunks -->
<path d="M0 0H60L50 20L44 34L20 40L0 46Z" fill="#21150d" filter="url(#h1)"/>
<g fill="#1c120b"><rect x="12" y="0" width="3" height="60"/><rect x="38" y="0" width="2.500" height="60"/><rect x="52" y="0" width="2.500" height="60"/><rect x="84" y="0" width="2.500" height="38"/><rect x="94" y="0" width="2.500" height="36"/><rect x="120" y="0" width="3" height="30"/><rect x="132" y="0" width="3" height="28"/><rect x="160" y="0" width="3" height="50"/><rect x="172" y="0" width="2.500" height="46"/><rect x="192" y="0" width="3" height="50"/><rect x="28" y="0" width="6.500" height="66"/><rect x="44.500" y="0" width="4.500" height="66"/><rect x="58.500" y="0" width="8.500" height="66"/><rect x="5" y="20" width="4" height="46"/><rect x="16" y="30" width="4" height="36"/><rect x="75" y="0" width="3" height="52"/><rect x="102" y="0" width="3" height="48"/><rect x="110" y="0" width="4" height="60"/><rect x="143" y="0" width="3" height="40"/><path d="M209 0H224L225 50L231 66H201L208 50Z"/></g>
<path d="M0 46H235V66H0Z" fill="#50290f" opacity=".6"/>
<g fill="#1c120b" opacity=".9"><rect x="28" y="40" width="6.500" height="26"/><rect x="44.500" y="40" width="4.500" height="26"/><rect x="58.500" y="40" width="8.500" height="26"/><path d="M209 40H224L225 50L231 66H201L208 50Z"/></g>
<rect x="168" y="50" width="40" height="13" fill="#4a4034" filter="url(#h1)"/>
<!-- ground -->
<rect y="64" width="235" height="68" fill="url(#p7g)"/>
<g filter="url(#h2)"><path d="M30 68L82 66L80 80L40 84L10 90L0 88Z" fill="#a85a28"/><path d="M0 92L70 84L90 96L70 108L0 110Z" fill="#94522a"/><path d="M160 86L222 84L232 98L170 102Z" fill="#a05c32"/><path d="M0 64H235V70H0Z" fill="#33200f"/><path d="M150 70L235 70V82L150 82Z" fill="#553018" opacity=".8"/></g>
<path d="M0 113H235V123H0Z" fill="#5c4c3e" filter="url(#h1)"/><path d="M0 123H235V132H0Z" fill="#2a1e14"/>
<g fill="#6a4a30" filter="url(#h1)"><circle cx="20" cy="127" r="2"/><circle cx="60" cy="128" r="2"/><circle cx="95" cy="126" r="2"/><circle cx="180" cy="128" r="2.500"/><circle cx="215" cy="126" r="2"/></g>
<!-- dog -->
<g filter="url(#h1)"><path d="M70 94L80 92L86 104L78 112L70 113Z" fill="#c8946a"/>
<path d="M82 58L104 56L107 80L104 100L102 117H97L96 100L92 117H88L86 96L80 76Z" fill="#d9cabb"/>
<path d="M65.500 56L74 48L80 44L90 44L100 48L106 56L104 66L94 64L88 66L84 60L76 60L70 59Z" fill="#a6602c"/>
<path d="M65.500 56L74 52L76 58L70 59Z" fill="#5a3418"/></g>
<!-- woman -->
<path d="M128 34Q130 26 140 26Q146 25 150 29Q154 30 153 36L150 46L152 58L128 58Z" fill="#17100c"/>
<path d="M127 40Q130 36 136 37L138 48L134 54L128 52Z" fill="#c48664"/>
<path d="M104 50L110 52L120 56L150 58L160 66L161 90L160 128L118 130L106 126L104 100L108 84L112 70Z" fill="#19130f"/>
<g fill="#3e4a5c"><path d="M118 60L126 58L122 76L112 84Z"/><path d="M144 60L158 68L159 84L146 80Z" opacity=".9"/><path d="M110 90L124 86L122 100L108 104Z" opacity=".7"/></g>
<path d="M132 100L160 92V128L134 130Z" fill="#2b3548" opacity=".9"/>
<path d="M123 90L130 87L134 93L130 99L125 98Z" fill="#c48664"/>
<path d="M100 50L106 49L110 54L104 58Z" fill="#b87a58"/>
</svg></div>
 <div class="lbl abs" id="l1" style="left:17px;top:258px"><span id="l1a" style="letter-spacing:.45px">woman-doing-yog</span><span id="l1b" style="letter-spacing:.1px;margin-left:.3px">···</span><span id="l1c" style="letter-spacing:.18px">ck-at-the-beach</span></div>
 <div class="lbl abs" id="l2" style="left:287px;top:258px;letter-spacing:0.14px">seeing-fireworks-in-the-beach</div>
 <div class="lbl abs" id="l3" style="left:538px;top:258px;letter-spacing:0.15px">walk-along-a-beach-at-sunset</div>
 <div class="lbl abs" id="l4" style="left:818px;top:258px;letter-spacing:0.3px">walk-hand-in-hand</div>
 <div class="lbl abs" id="l5" style="left:57px;top:428px;letter-spacing:0.31px">watering-a-flower-pot</div>
 <div class="lbl abs" id="l6" style="left:285px;top:428px;letter-spacing:0.31px">running-happily-on-the-beach</div>
 <div class="lbl abs" id="l7" style="left:564px;top:428px;letter-spacing:0.35px">pet-a-dog-in-a-park</div>
 <!-- pencils -->
 <svg class="abs pen" style="left:228px;top:257px" width="20" height="18" viewBox="0 0 20 18"><use href="#pen"/></svg>
 <svg class="abs pen" style="left:479px;top:257px" width="20" height="18" viewBox="0 0 20 18"><use href="#pen"/></svg>
 <svg class="abs pen" style="left:730px;top:257px" width="20" height="18" viewBox="0 0 20 18"><use href="#pen"/></svg>
 <svg class="abs pen" style="left:981px;top:257px" width="20" height="18" viewBox="0 0 20 18"><use href="#pen"/></svg>
 <svg class="abs pen" style="left:228px;top:427px" width="20" height="18" viewBox="0 0 20 18"><use href="#pen"/></svg>
 <svg class="abs pen" style="left:479px;top:427px" width="20" height="18" viewBox="0 0 20 18"><use href="#pen"/></svg>
 <svg class="abs pen" style="left:730px;top:427px" width="20" height="18" viewBox="0 0 20 18"><use href="#pen"/></svg>
 <svg width="0" height="0" style="position:absolute"><defs><g id="pen" fill="none" stroke="#4a4a48" stroke-width="1.150" stroke-linejoin="round" transform="translate(-.4,-1) translate(2.900,16.800) scale(.94) translate(-2.900,-16.800)"><path d="M2.900 16.800L4 11L12.600 2.600Q13.500 1.800 14.400 2.600L17.600 5.700Q18.300 6.500 17.500 7.300L8.800 15.600Z"/><path d="M4.300 11.300L8.400 15.300M11.800 3.800L16.300 8.100"/></g></defs></svg>
 <!-- annotations -->
 <svg class="abs" style="left:0;top:0" width="1043" height="663" viewBox="8 1 1043 663"><g fill="#e8472a"><path d="M322.800 566.200L335.800 601.800L341.100 600.300L337 618L324.600 604.800L330 603.400Z"/><path d="M467.200 576.100L447.600 614.200L453.100 617L437.500 627.200L438.300 609.500L443.400 612Z"/><path d="M768 498.400L762.200 469.600L765.800 468.600L753.400 455.900L750 473.200L755.400 471.600Z"/></g><rect x="726.800" y="422.900" width="41.300" height="29.200" rx="6" fill="none" stroke="#e8472a" stroke-width="3.800"/></svg>
 <div class="ann abs" id="a1" style="left:250px;top:544px">choose dvd type</div>
 <div class="ann abs" id="a2" style="left:396px;top:550px">choose quality level</div>
 <div class="ann abs" id="a3" style="left:723.500px;top:497px;letter-spacing:.2px">edit video</div>
 <!-- bottom bar -->
 <div class="abs" style="left:0;top:616px;width:1043px;height:0;border-top:1px dotted #c4c4c0"></div>
 <svg class="abs" style="left:11px;top:627px" width="52" height="24" viewBox="0 0 52 24"><g fill="none"><rect x="1.500" y="3.500" width="18" height="18" rx="2" stroke="#4a3f38" stroke-width="1.200"/><path d="M5.500 12.500H15.500M10.500 7.500V17.500" stroke="#4a4a48" stroke-width="1.200"/><g stroke="#7d8588" stroke-width="1"><path d="M30 6.500H48M34 6.500Q39 -0.500 44 6.500M32.500 6.500V21Q32.500 22 33.500 22H44.500Q45.500 22 45.500 21V6.500M36 10V19M39 10V19M42 10V19"/></g></g></svg>
 <div class="bt abs" id="b1" style="left:82px;top:634px">TV Standard</div>
 <div class="cb abs" style="left:160px;width:50px"></div><div class="bt abs" id="b2" style="left:165px;top:633px">16:9</div>
 <div class="cb abs" style="left:216px;width:58px"></div><div class="bt abs" id="b3" style="left:220px;top:633px">NTSC</div>
 <svg class="abs" style="left:277px;top:631px" width="18" height="18" viewBox="0 0 18 18"><circle cx="9" cy="9" r="7.600" fill="none" stroke="#555" stroke-width="1.100"/><text x="9" y="13" font-family="Liberation Sans" font-size="11" text-anchor="middle" fill="#555">?</text></svg>
 <div class="cb abs" style="left:314px;width:71px"></div><div class="bt abs" id="b4" style="left:318px;top:633px">DVD-5</div>
 <div class="cb abs" style="left:391px;width:83px;border:1px solid #2c5f99;background:#cce4f7"></div><div class="bt abs" id="b5" style="left:395px;top:633px">Fit to disc</div>
 <svg class="abs" style="left:0;top:629px" width="480" height="22" viewBox="0 0 480 22"><g fill="none" stroke="#444" stroke-width="1.100"><path d="M197 9.500L201 13.500L205 9.500M261 9.500L265 13.500L269 9.500M371.500 9.500L375.500 13.500L379.500 9.500M461.500 9.500L465.500 13.500L469.500 9.500"/></g></svg>
 <div class="abs" style="left:480px;top:628px;width:553px;height:23px;background:#e3e3e1;border:1px solid #b9b9b5"></div>
 <div class="abs" style="left:480px;top:628px;width:22px;height:23px;background:#2d2b26"></div>
 <div class="bt abs" id="b6" style="left:957.500px;top:633px;font-size:12.5px">0.19/4.70G</div>
</div>
<div id="list" class="abs" style="left:399px;top:650px"><div>Lowest</div><div>Low</div><div>Normal</div><div>High</div><div>Best</div><div style="background:#cde8fa">Fit to disc</div></div>
</body></html>
